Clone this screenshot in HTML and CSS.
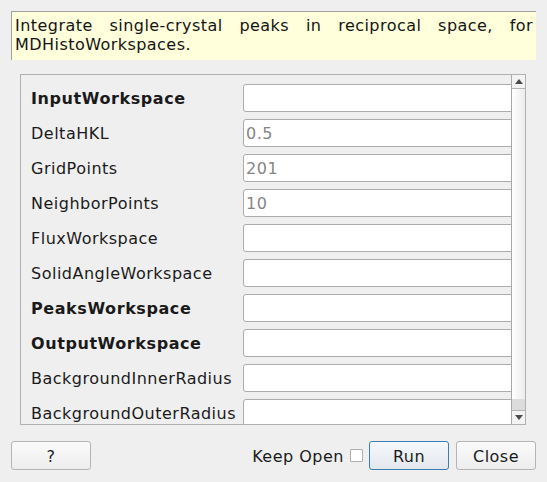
FILE: index.html
```html
<!DOCTYPE html>
<html>
<head>
<meta charset="utf-8">
<link rel="stylesheet" href="styles.css">
</head>
<body>
<div class="dialog">
  <div class="desc">Integrate single-crystal peaks in reciprocal space, for MDHistoWorkspaces.</div>
  <div class="scrollarea">
    <div class="viewport">
      <div class="props">
        <label class="lbl req">InputWorkspace</label><input class="field" value="">
        <label class="lbl">DeltaHKL</label><input class="field dim" value="0.5">
        <label class="lbl">GridPoints</label><input class="field dim" value="201">
        <label class="lbl">NeighborPoints</label><input class="field dim" value="10">
        <label class="lbl">FluxWorkspace</label><input class="field" value="">
        <label class="lbl">SolidAngleWorkspace</label><input class="field" value="">
        <label class="lbl req">PeaksWorkspace</label><input class="field" value="">
        <label class="lbl req">OutputWorkspace</label><input class="field" value="">
        <label class="lbl">BackgroundInnerRadius</label><input class="field" value="">
        <label class="lbl">BackgroundOuterRadius</label><input class="field" value="">
      </div>
    </div>
    <div class="vscroll">
      <div class="arrow up"><svg width="8" height="5" viewBox="0 0 8 5"><polygon points="0,5 8,5 4,0" fill="#4a4a4a"/></svg></div>
      <div class="handle"></div>
      <div class="trough"></div>
      <div class="arrow down"><svg width="8" height="5" viewBox="0 0 8 5"><polygon points="0,0 8,0 4,5" fill="#4a4a4a"/></svg></div>
    </div>
  </div>
  <div class="footer">
    <button class="btn">?</button>
    <div class="spacer"></div>
    <span class="keep">Keep Open</span>
    <span class="check"></span>
    <button class="btn default">Run</button>
    <button class="btn">Close</button>
  </div>
</div>
</body>
</html>
```

FILE: styles.css
```css
html, body {
  margin: 0;
  padding: 0;
  background: #efefef;
}
body {
  font-family: "DejaVu Sans", sans-serif;
  font-size: 16px;
  letter-spacing: 0.5px;
  color: #1a1a1a;
}
.dialog {
  display: flex;
  flex-direction: column;
  padding: 11px 11px 0 11px;
  width: 525px;
}
.desc {
  background: #ffffdc;
  border-top: 1px solid #a0a0a0;
  border-left: 1px solid #a0a0a0;
  padding: 4px 3px 0 3px;
  height: 44px;
  line-height: 19px;
  text-align: justify;
  color: #141414;
  letter-spacing: 0.45px;
}
.scrollarea {
  margin: 14px 10px 0 9px;
  height: 349px;
  border: 1px solid #b0b0b0;
  display: flex;
}
.viewport {
  flex: 1;
  overflow: hidden;
  padding: 9px 0 0 10px;
}
.props {
  display: grid;
  grid-template-columns: auto 1fr;
  column-gap: 7px;
  row-gap: 7px;
  margin-right: -10px;
}
.lbl {
  display: flex;
  align-items: center;
  box-sizing: border-box;
  height: 28px;
  padding-top: 1px;
  white-space: nowrap;
}
.lbl.req {
  font-weight: bold;
  letter-spacing: 0.58px;
}
.field {
  box-sizing: border-box;
  height: 28px;
  border: 1px solid #acacac;
  border-radius: 3px;
  background: #ffffff;
  font: inherit;
  letter-spacing: inherit;
  padding: 1px 0 0 2px;
  margin: 0;
  outline: none;
  min-width: 0;
}
.field.dim {
  color: #858585;
}
.vscroll {
  width: 13px;
  border-left: 1px solid #a8a8a8;
  display: flex;
  flex-direction: column;
}
.arrow {
  height: 13px;
  display: flex;
  align-items: center;
  justify-content: center;
  background: #f3f3f3;
}
.arrow.up {
  border-bottom: 1px solid #b4b4b4;
}
.arrow.down {
  border-top: 1px solid #b4b4b4;
}
.handle {
  flex: 1;
  background: linear-gradient(to right, #ffffff, #ececec);
}
.trough {
  height: 11px;
  background: #dcdcdc;
}
.footer {
  display: flex;
  align-items: center;
  margin-top: 16px;
  height: 29px;
}
.spacer {
  flex: 1;
}
.btn {
  box-sizing: border-box;
  width: 80px;
  height: 29px;
  border: 1px solid #b4b4b4;
  border-radius: 3px;
  background: linear-gradient(to bottom, #fbfbfb, #ededed);
  font: inherit;
  letter-spacing: inherit;
  color: #1a1a1a;
  padding: 1px 0 0 0;
  margin: 0 0 0 7px;
}
.btn:first-child {
  margin-left: 0;
}
.btn.default {
  border-color: #3a7db3;
  background: linear-gradient(to bottom, #f6f8fa, #e3e8ed);
  margin-left: 6px;
}
.keep {
  margin-right: 6px;
  padding-top: 1px;
}
.check {
  box-sizing: border-box;
  width: 13px;
  height: 13px;
  border: 1px solid #b0b0b0;
  background: #ffffff;
  border-radius: 1px;
}
```
